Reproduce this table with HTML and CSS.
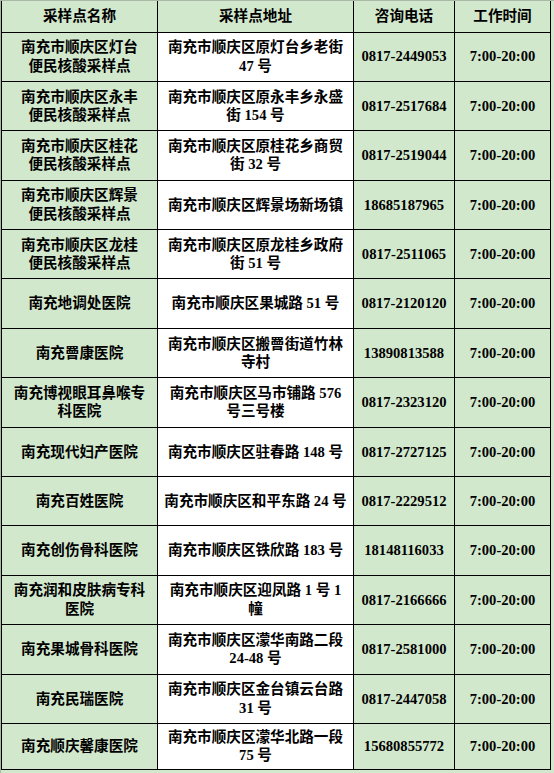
FILE: index.html
```html
<!DOCTYPE html>
<html lang="zh-CN">
<head>
<meta charset="utf-8">
<title>采样点</title>
<link rel="stylesheet" href="styles.css">
</head>
<body>
<div class="frame">
<table class="sites">
<colgroup>
<col class="c-name"><col class="c-addr"><col class="c-tel"><col class="c-time">
</colgroup>
<thead>
<tr><th>采样点名称</th><th>采样点地址</th><th>咨询电话</th><th>工作时间</th></tr>
</thead>
<tbody>
<tr><td>南充市顺庆区灯台<br>便民核酸采样点</td><td class="addr">南充市顺庆区原灯台乡老街<br>47 号</td><td>0817-2449053</td><td>7:00-20:00</td></tr>
<tr><td>南充市顺庆区永丰<br>便民核酸采样点</td><td class="addr">南充市顺庆区原永丰乡永盛<br>街 154 号</td><td>0817-2517684</td><td>7:00-20:00</td></tr>
<tr><td>南充市顺庆区桂花<br>便民核酸采样点</td><td class="addr">南充市顺庆区原桂花乡商贸<br>街 32 号</td><td>0817-2519044</td><td>7:00-20:00</td></tr>
<tr><td>南充市顺庆区辉景<br>便民核酸采样点</td><td class="addr">南充市顺庆区辉景场新场镇</td><td>18685187965</td><td>7:00-20:00</td></tr>
<tr><td>南充市顺庆区龙桂<br>便民核酸采样点</td><td class="addr">南充市顺庆区原龙桂乡政府<br>街 51 号</td><td>0817-2511065</td><td>7:00-20:00</td></tr>
<tr><td>南充地调处医院</td><td class="addr">南充市顺庆区果城路 51 号</td><td>0817-2120120</td><td>7:00-20:00</td></tr>
<tr><td>南充罾康医院</td><td class="addr">南充市顺庆区搬罾街道竹林<br>寺村</td><td>13890813588</td><td>7:00-20:00</td></tr>
<tr><td>南充博视眼耳鼻喉专<br>科医院</td><td class="addr">南充市顺庆区马市铺路 576<br>号三号楼</td><td>0817-2323120</td><td>7:00-20:00</td></tr>
<tr><td>南充现代妇产医院</td><td class="addr">南充市顺庆区驻春路 148 号</td><td>0817-2727125</td><td>7:00-20:00</td></tr>
<tr><td>南充百姓医院</td><td class="addr">南充市顺庆区和平东路 24 号</td><td>0817-2229512</td><td>7:00-20:00</td></tr>
<tr><td>南充创伤骨科医院</td><td class="addr">南充市顺庆区铁欣路 183 号</td><td>18148116033</td><td>7:00-20:00</td></tr>
<tr><td>南充润和皮肤病专科<br>医院</td><td class="addr">南充市顺庆区迎凤路 1 号 1<br>幢</td><td>0817-2166666</td><td>7:00-20:00</td></tr>
<tr><td>南充果城骨科医院</td><td class="addr">南充市顺庆区濛华南路二段<br>24-48 号</td><td>0817-2581000</td><td>7:00-20:00</td></tr>
<tr><td>南充民瑞医院</td><td class="addr">南充市顺庆区金台镇云台路<br>31 号</td><td>0817-2447058</td><td>7:00-20:00</td></tr>
<tr class="last"><td>南充顺庆馨康医院</td><td class="addr">南充市顺庆区濛华北路一段<br>75 号</td><td>15680855772</td><td>7:00-20:00</td></tr>
</tbody>
</table>
</div>
</body>
</html>
```
FILE: styles.css
```css
html, body {
  margin: 0;
  padding: 0;
  background: #d2e8cc;
}
.frame {
  border-top: 1px solid #aab8a6;
  border-left: 1px solid #aab8a6;
  width: 553px;
  height: 772px;
  overflow: hidden;
}
.sites {
  border-collapse: collapse;
  table-layout: fixed;
  width: 549px;
  font-family: "Liberation Serif", "Noto Sans CJK SC", serif;
  font-weight: bold;
  font-size: 14.6px;
  line-height: 18.5px;
  color: #000;
  border: 1px solid #000;
  border-top: none;
}
.c-name { width: 156px; }
.c-addr { width: 196px; }
.c-tel { width: 101px; }
.c-time { width: 96px; }
.sites th, .sites td {
  border: 1px solid #000;
  text-align: center;
  vertical-align: middle;
  padding: 0 2px;
  background: #d2e8cc;
  font-weight: bold;
  white-space: nowrap;
}
.sites thead th {
  border-top: none;
  height: 30.5px;
}
.sites tbody tr {
  height: 49.4px;
}
.sites tbody tr.last {
  height: 45.6px;
}
.sites td.addr {
  background: #ffffff;
}
```
